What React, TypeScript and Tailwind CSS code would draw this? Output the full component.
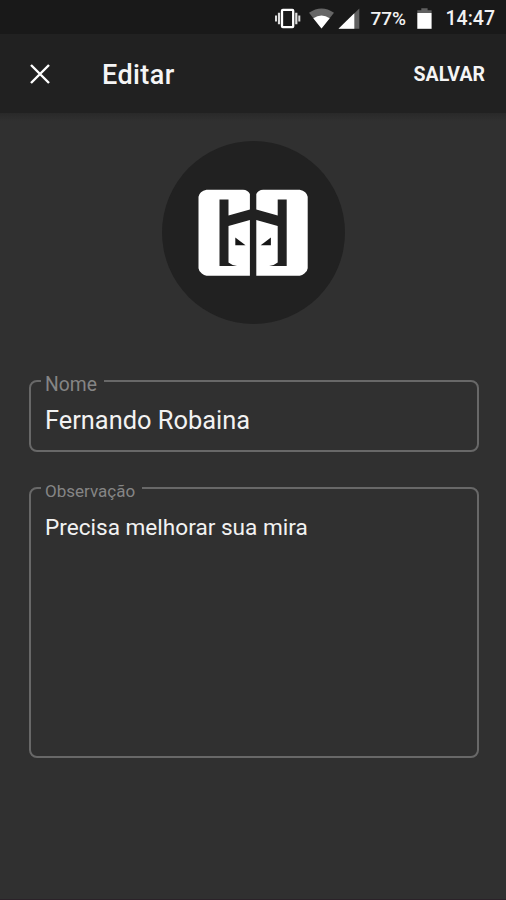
import type { ReactNode } from "react";

function StatusBar() {
  return (
    <div className="flex h-[34px] shrink-0 items-center justify-end bg-[#191919] pt-[1px] pr-[11px] text-[19px] font-medium text-[#f2f2f2]">
      <svg className="mr-[8px] h-[22px] w-[27px]" viewBox="274 6 27 22" aria-hidden="true">
        <rect x="282" y="8.9" width="11.2" height="17.2" rx="0.8" fill="none" stroke="#fff" strokeWidth="2.3" />
        <path d="M279 11.800v11.400M296.300 11.800v11.400" stroke="#ddd" strokeWidth="2.200" />
        <path d="M276 14.500v6M299.300 14.500v6" stroke="#ddd" strokeWidth="2" />
      </svg>
      <svg className="mr-[3px] h-[22px] w-[26px]" viewBox="309 6 26 22" aria-hidden="true">
        <path d="M309 11.8q12.5-8.6 25 0L321.500 27.500Z" fill="#666" />
        <path d="M313.300 17.200q8.200-5.400 16.400 0L321.500 27.500Z" fill="#fff" />
      </svg>
      <svg className="mr-[11px] h-[22px] w-[22px]" viewBox="338 6 22 22" aria-hidden="true">
        <path d="M338.500 27.700L359.300 7.500v20.200Z" fill="#606060" />
        <path d="M338.500 27.700L354.300 12.300v15.400Z" fill="#fff" />
      </svg>
      <span className="w-[46px] pt-[1px] leading-none whitespace-nowrap">77%</span>
      <svg className="mr-[14px] h-[22px] w-[15px]" viewBox="417 6 15 22" aria-hidden="true">
        <path d="M417.300 12V9.300h4V7.300h6.300v2h4V12Z" fill="#606060" />
        <path d="M417.300 12h14.300v15.800h-14.300Z" fill="#fff" />
      </svg>
      <span className="pt-[2px] text-[19.500px] leading-none">14:47</span>
    </div>
  );
}

function Header() {
  return (
    <header className="flex h-[79px] shrink-0 items-center bg-[#212121] pr-[21px] pl-[29px] text-[#f5f5f5]">
      <button type="button" aria-label="Fechar">
        <svg className="h-[22px] w-[22px]" viewBox="0 0 22 22">
          <path d="M2 2L20 20M20 2L2 20" stroke="#fff" strokeWidth="2.400" />
        </svg>
      </button>
      <h1 className="ml-[51px] flex-1 pt-[4px] text-[27px] leading-none font-medium tracking-[0.400px]">Editar</h1>
      <button type="button" className="pt-[3px] text-[19.500px] leading-none font-bold">
        SALVAR
      </button>
    </header>
  );
}

function LogoHalf() {
  return (
    <>
      <path
        d="M207 189.500H243.500Q248.500 189.700 250.400 193.800V209.200L229 215.200V199.300H220V265.700H237.500Q232 265 229 262.300V225.700L250.400 219.800V275.500H207Q204.500 275.300 202.300 273.300Q199.200 270.800 199 268V196.500Q200 191 207 189.500Z"
        fill="#fff"
      />
      <path d="M235.800 237.300V245H246Z" fill="#161616" />
    </>
  );
}

function Avatar() {
  return (
    <div className="flex h-[183px] w-[183px] items-center justify-center rounded-full bg-[#212121]">
      <svg className="h-[90px] w-[112px]" viewBox="197.500 187.800 112 90" role="img" aria-label="Avatar">
        <LogoHalf />
        <g transform="translate(507.200 0) scale(-1 1)">
          <LogoHalf />
        </g>
      </svg>
    </div>
  );
}

function Field({ label, className, labelClass, children }: { label: string; className: string; labelClass: string; children: ReactNode }) {
  return (
    <fieldset className={`rounded-[8px] border-2 border-[#686868] pr-[15px] pl-[10px] ${className}`}>
      <legend className={`flex h-[2px] items-center px-[4px] text-[#858585] ${labelClass}`}>
        <span className="relative top-[3px] leading-none">{label}</span>
      </legend>
      {children}
    </fieldset>
  );
}

export default function App() {
  return (
    <div className="flex h-[900px] w-[506px] flex-col overflow-hidden border-b border-[#2b2229] bg-[#303030] font-[Roboto,sans-serif]">
      <StatusBar />
      <Header />
      <main className="flex flex-1 flex-col bg-linear-to-b from-[#292929] to-[#303030] to-[8px] pt-[28px] pr-[27px] pl-[29px]">
        <div className="flex justify-center pr-[2px]">
          <Avatar />
        </div>
        <Field label="Nome" className="mt-[56px] h-[72px]" labelClass="w-[63px] pt-[2px] text-[19.300px]">
          <p className="pt-[26px] pl-[4px] text-[25.400px] leading-none text-[#f2f2f2]">Fernando Robaina</p>
        </Field>
        <Field label="Observação" className="mt-[35px] h-[271px]" labelClass="w-[101px] text-[17px]">
          <p className="pt-[28px] pl-[4px] text-[22.600px] leading-none text-[#f2f2f2]">Precisa melhorar sua mira</p>
        </Field>
      </main>
    </div>
  );
}
